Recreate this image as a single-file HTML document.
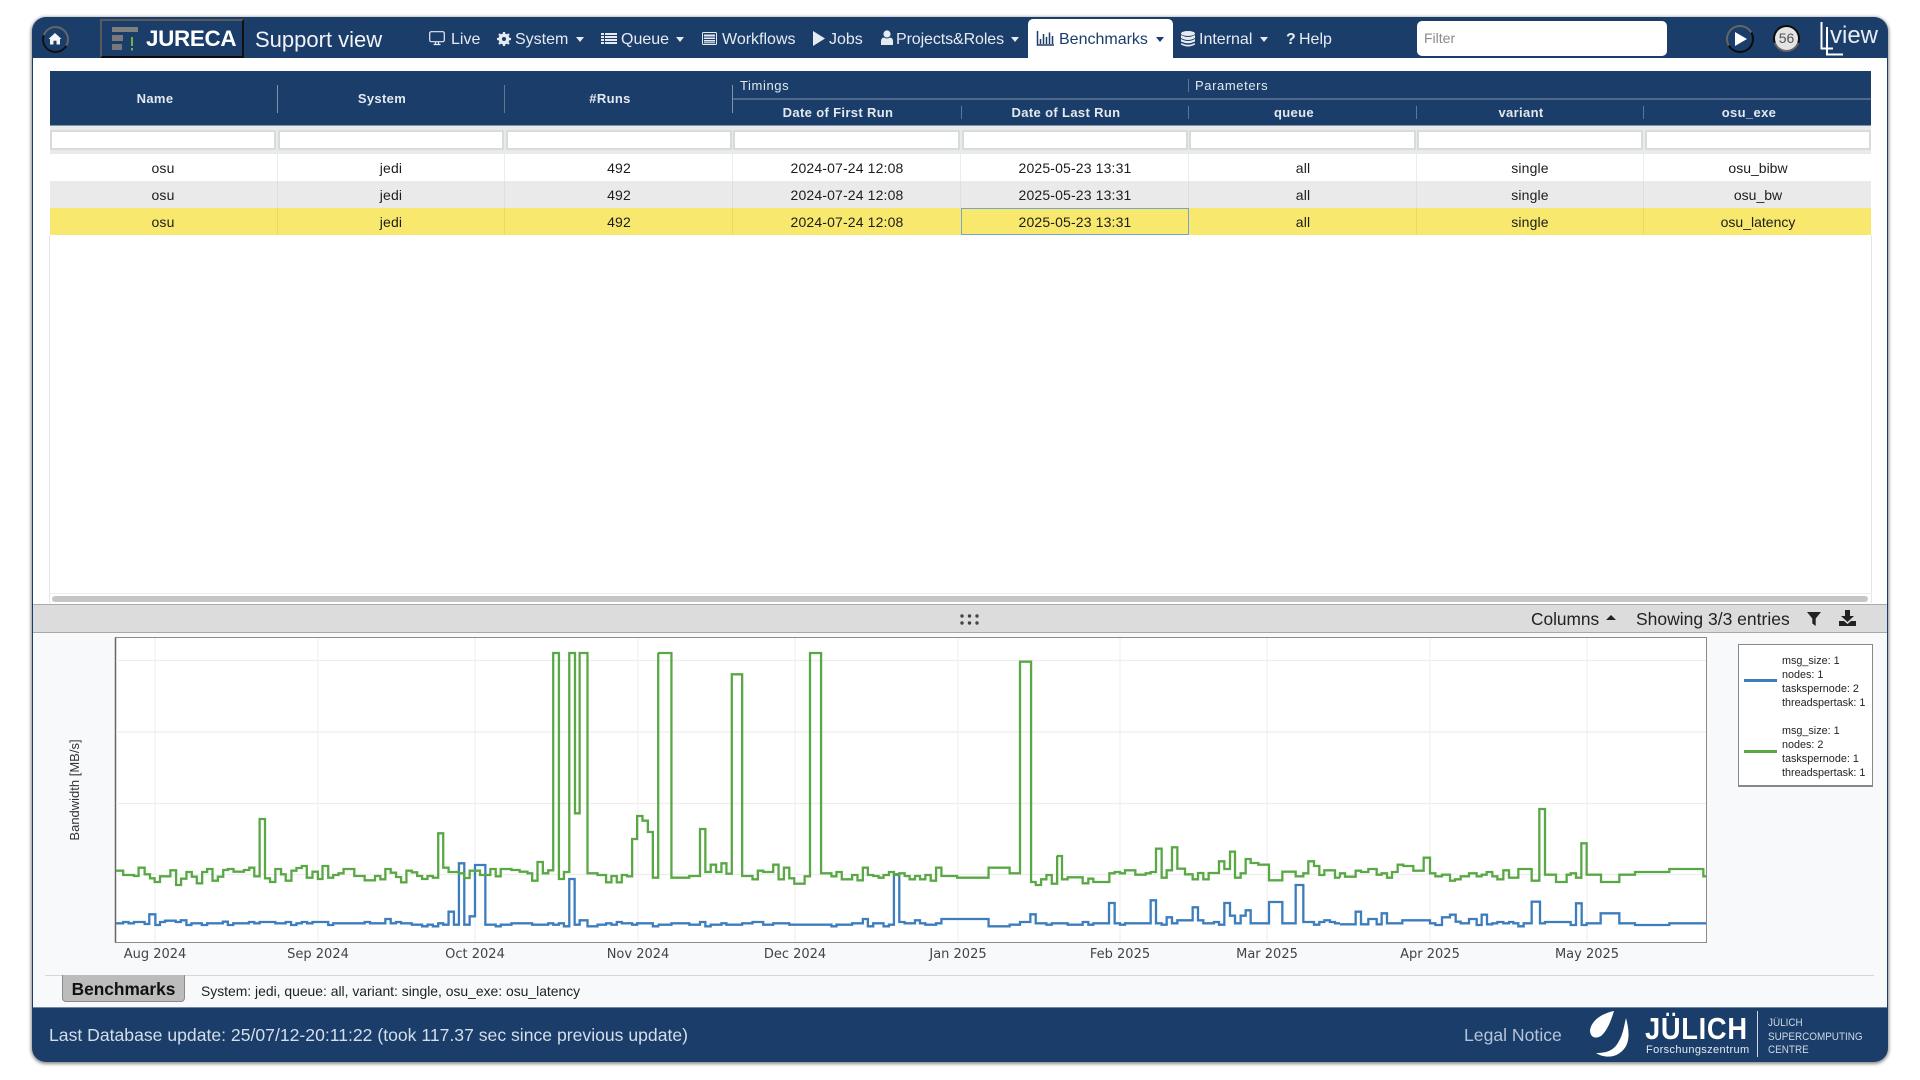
<!DOCTYPE html>
<html><head><meta charset="utf-8"><title>JURECA Support view</title>
<style>
*{box-sizing:border-box}
html,body{margin:0;padding:0;width:1920px;height:1080px;overflow:hidden;background:#fff;font-family:"Liberation Sans",sans-serif}
.a{position:absolute;white-space:nowrap}
#app{position:absolute;left:32px;top:17px;width:1856px;height:1045px;border-radius:14px;background:#1a3d6a;box-shadow:0 1px 3px 1px rgba(0,0,0,.45)}
#white{position:absolute;left:33px;top:58px;width:1854px;height:949px;background:#fff}
#lower{position:absolute;left:33px;top:632px;width:1854px;height:375px;background:#f8f9fa}
.nav{color:#e6ebf2;font-size:16px;top:30px;line-height:20px}
.car{position:absolute;top:37px;width:0;height:0;border-left:4.5px solid transparent;border-right:4.5px solid transparent;border-top:5px solid #e6ebf2}
.hd{color:#e4e9f0;font-size:13px;font-weight:bold;letter-spacing:.35px;transform:translateX(-50%);line-height:16px}
.dv{position:absolute;width:1px;background:#7186a3}
.inp{position:absolute;top:130px;height:20px;background:#fff;border:2px solid #d8dbdb;width:226px}
.row{position:absolute;left:50px;width:1821px;height:27px}
.c{position:absolute;font-size:14px;letter-spacing:.15px;color:#1c1c1c;transform:translateX(-50%);line-height:16px;white-space:nowrap}
.cd{position:absolute;width:1px}
.tick{font-family:"DejaVu Sans",sans-serif;font-size:13px;fill:#444;text-anchor:middle}
.leg{position:absolute;left:1782px;font-size:10.8px;color:#222;line-height:14px;white-space:nowrap}
svg{position:absolute;overflow:visible}
</style></head><body>
<div id="app"></div>
<div id="white"></div>
<div id="lower"></div>

<!-- brand -->
<div class="a" style="left:42px;top:26px;width:27px;height:27px;border-radius:50%;background:conic-gradient(#666 0 120deg,#111 120deg 290deg,#666 290deg);"></div>
<div class="a" style="left:44px;top:28px;width:23px;height:23px;border-radius:50%;background:#1a3d6a"></div>
<svg style="left:48px;top:32px" width="14" height="14" viewBox="0 0 14 14"><path d="M7 1 L13.5 7 L12 7 L12 12.5 L8.5 12.5 L8.5 8.8 L5.5 8.8 L5.5 12.5 L2 12.5 L2 7 L.5 7 Z" fill="#f3f5f8"/></svg>
<div class="a" style="left:100px;top:19px;width:144px;height:39px;background:#1a3d6a;border:2px solid;border-color:#5a5a5a #111 #0c0c0c #5a5a5a"></div>
<svg style="left:111px;top:27px" width="30" height="26" viewBox="0 0 30 26"><rect x="1" y="0" width="26" height="5" fill="#808080"/><rect x="1" y="8" width="11" height="6" fill="#7a7a7a"/><rect x="1" y="17" width="10" height="6" fill="#777"/><rect x="20" y="10" width="2" height="9" fill="#6db33f"/><rect x="20" y="21" width="2" height="2.5" fill="#6db33f"/></svg>
<div class="a" style="left:146px;top:25px;font-size:22.4px;font-weight:bold;color:#fff;line-height:28px;letter-spacing:-.3px">JURECA</div>
<div class="a" style="left:255px;top:26px;font-size:22px;color:#f0f3f7;line-height:28px">Support view</div>

<!-- nav -->
<svg style="left:429px;top:31px" width="16" height="15" viewBox="0 0 16 15"><rect x=".7" y=".7" width="14.6" height="10" rx="1.5" fill="none" stroke="#e6ebf2" stroke-width="1.2"/><path d="M6.5 11 v2 M9.5 11 v2 M4.5 13.5 h7" stroke="#e6ebf2" stroke-width="1.2" fill="none"/></svg>
<div class="a nav" style="left:451px">Live</div>
<svg style="left:497px;top:32px" width="14" height="14" viewBox="0 0 14 14"><circle cx="7" cy="7" r="4" fill="none" stroke="#e6ebf2" stroke-width="3"/><path d="M7 0 V14 M0 7 H14 M2 2 L12 12 M12 2 L2 12" stroke="#e6ebf2" stroke-width="2.2"/><circle cx="7" cy="7" r="2" fill="#1a3d6a"/></svg>
<div class="a nav" style="left:515px">System</div><div class="car" style="left:576px"></div>
<svg style="left:601px;top:32px" width="16" height="13" viewBox="0 0 16 13"><path d="M0 1h3v2H0zM4 1h12v2H4zM0 4h3v2H0zM4 4h12v2H4zM0 7h3v2H0zM4 7h12v2H4zM0 10h3v2H0zM4 10h12v2H4z" fill="#e6ebf2"/></svg>
<div class="a nav" style="left:621px">Queue</div><div class="car" style="left:676px"></div>
<svg style="left:702px;top:32px" width="15" height="13" viewBox="0 0 15 13"><rect x=".5" y=".5" width="14" height="12" rx="1" fill="none" stroke="#e6ebf2"/><path d="M2 2.5h11v2H2zM2 5.5h11v1.5H2zM2 8h11v1.5H2zM2 10.2h11v1H2z" fill="#e6ebf2"/></svg>
<div class="a nav" style="left:722px">Workflows</div>
<svg style="left:812px;top:31px" width="14" height="15" viewBox="0 0 14 15"><path d="M1 0 L13 7.5 L1 15Z" fill="#e6ebf2"/></svg>
<div class="a nav" style="left:829px">Jobs</div>
<svg style="left:881px;top:30px" width="12" height="15" viewBox="0 0 12 15"><circle cx="6" cy="4" r="3.6" fill="#e6ebf2"/><path d="M0 15 V11 Q0 8 3 7.5 Q6 9.5 9 7.5 Q12 8 12 11 V15Z" fill="#e6ebf2"/></svg>
<div class="a nav" style="left:896px;letter-spacing:-.1px">Projects&amp;Roles</div><div class="car" style="left:1011px"></div>
<div class="a" style="left:1028px;top:19px;width:145px;height:40px;background:#fff;border-radius:5px 5px 0 0"></div>
<svg style="left:1037px;top:31px" width="17" height="15" viewBox="0 0 17 15"><path d="M.5 0 V14 H17 M3.5 8v5 M6.5 3v10 M9.5 6v7 M12.5 1.5v11.5 M15.5 5v8" fill="none" stroke="#1a3d6a" stroke-width="1.5"/></svg>
<div class="a nav" style="left:1059px;color:#1a3d6a">Benchmarks</div><div class="car" style="left:1156px;border-top-color:#1a3d6a"></div>
<svg style="left:1181px;top:31px" width="14" height="16" viewBox="0 0 14 16"><ellipse cx="7" cy="2.5" rx="7" ry="2.5" fill="#e6ebf2"/><path d="M0 4 Q7 8 14 4 V7 Q7 11 0 7Z M0 8 Q7 12 14 8 V10.5 Q7 14 0 10.5Z M0 12 Q7 15.5 14 12 V13.5 Q7 17.500 0 13.500Z" fill="#e6ebf2"/></svg>
<div class="a nav" style="left:1199px">Internal</div><div class="car" style="left:1260px"></div>
<div class="a nav" style="left:1286px;font-weight:bold">?</div>
<div class="a nav" style="left:1299px">Help</div>
<div class="a" style="left:1417px;top:21px;width:250px;height:35px;background:#fff;border-radius:5px;font-size:14px;color:#8a8a8a;line-height:35px;padding-left:7px">Filter</div>

<div class="a" style="left:1726px;top:25px;width:28px;height:28px;border-radius:50%;background:conic-gradient(#666 0 60deg,#0c0c0c 60deg 240deg,#666 240deg)"></div>
<div class="a" style="left:1728px;top:27px;width:24px;height:24px;border-radius:50%;background:#1a3d6a"></div>
<svg style="left:1735px;top:32px" width="12" height="14" viewBox="0 0 12 14"><path d="M0 0 L12 7 L0 14Z" fill="#fff"/></svg>
<div class="a" style="left:1773px;top:25px;width:27px;height:27px;border-radius:50%;background:conic-gradient(#0c0c0c 0 110deg,#666 110deg 250deg,#0c0c0c 250deg)"></div>
<div class="a" style="left:1775px;top:27px;width:23px;height:23px;border-radius:50%;background:#e4e4e4;color:#555;font-size:14px;text-align:center;line-height:23px">56</div>
<svg style="left:1819px;top:22px" width="26" height="34" viewBox="0 0 26 34"><path d="M2.500 0 V26.500 H14 M8 5 V32.500 H24" fill="none" stroke="#fff" stroke-width="2"/></svg>
<div class="a" style="left:1830px;top:21px;font-size:24px;color:#e8edf3;line-height:30px">view</div>

<!-- table header -->
<div class="a" style="left:50px;top:71px;width:1821px;height:55px;background:#1a3d6a;border-bottom:1px solid #8293a9"></div>
<div class="a" style="left:732px;top:97.500px;width:1139px;height:2px;background:#51688a"></div>
<div class="dv" style="left:277px;top:85px;height:28px;background:#7f93ac"></div>
<div class="dv" style="left:504px;top:85px;height:28px;background:#5f7695"></div>
<div class="dv" style="left:732px;top:85px;height:28px;background:#7f93ac"></div>
<div class="dv" style="left:961px;top:106px;height:13px;background:#5f7695"></div>
<div class="dv" style="left:1188px;top:79px;height:13px;background:#5f7695"></div>
<div class="dv" style="left:1188px;top:106px;height:13px;background:#5f7695"></div>
<div class="dv" style="left:1416px;top:106px;height:13px;background:#5f7695"></div>
<div class="dv" style="left:1643px;top:106px;height:13px;background:#5f7695"></div>
<div class="a hd" style="left:155px;top:91px">Name</div>
<div class="a hd" style="left:382px;top:91px">System</div>
<div class="a hd" style="left:610px;top:91px">#Runs</div>
<div class="a hd" style="left:740px;top:78px;transform:none;font-weight:normal;letter-spacing:.6px">Timings</div>
<div class="a hd" style="left:1195px;top:78px;transform:none;font-weight:normal;letter-spacing:.6px">Parameters</div>
<div class="a hd" style="left:838px;top:105px">Date of First Run</div>
<div class="a hd" style="left:1066px;top:105px">Date of Last Run</div>
<div class="a hd" style="left:1294px;top:105px">queue</div>
<div class="a hd" style="left:1521px;top:105px">variant</div>
<div class="a hd" style="left:1749px;top:105px">osu_exe</div>

<!-- filter row -->
<div class="a" style="left:50px;top:126px;width:1821px;height:28px;background:#e9eaea"></div>
<div class="inp" style="left:50px"></div><div class="inp" style="left:278px"></div><div class="inp" style="left:506px"></div><div class="inp" style="left:733px;width:227px"></div><div class="inp" style="left:962px"></div><div class="inp" style="left:1189px;width:227px"></div><div class="inp" style="left:1417px"></div><div class="inp" style="left:1645px"></div>

<!-- rows -->
<div class="row" style="top:154px;background:#fff"></div>
<div class="row" style="top:181px;background:#eaeaea"></div>
<div class="row" style="top:208px;background:#f8e96e"></div>
<div class="cd" style="left:277px;top:154px;height:27px;background:#ececec"></div><div class="cd" style="left:504px;top:154px;height:27px;background:#ececec"></div><div class="cd" style="left:732px;top:154px;height:27px;background:#ececec"></div><div class="cd" style="left:960px;top:154px;height:27px;background:#ececec"></div><div class="cd" style="left:1188px;top:154px;height:27px;background:#ececec"></div><div class="cd" style="left:1416px;top:154px;height:27px;background:#ececec"></div><div class="cd" style="left:1643px;top:154px;height:27px;background:#ececec"></div>
<div class="cd" style="left:277px;top:181px;height:27px;background:#dedede"></div><div class="cd" style="left:504px;top:181px;height:27px;background:#dedede"></div><div class="cd" style="left:732px;top:181px;height:27px;background:#dedede"></div><div class="cd" style="left:960px;top:181px;height:27px;background:#dedede"></div><div class="cd" style="left:1188px;top:181px;height:27px;background:#dedede"></div><div class="cd" style="left:1416px;top:181px;height:27px;background:#dedede"></div><div class="cd" style="left:1643px;top:181px;height:27px;background:#dedede"></div>
<div class="cd" style="left:277px;top:208px;height:27px;background:#e9db62"></div><div class="cd" style="left:504px;top:208px;height:27px;background:#e9db62"></div><div class="cd" style="left:732px;top:208px;height:27px;background:#e9db62"></div><div class="cd" style="left:1416px;top:208px;height:27px;background:#e9db62"></div><div class="cd" style="left:1643px;top:208px;height:27px;background:#e9db62"></div>
<div class="a" style="left:961px;top:208px;width:228px;height:27px;border:1px solid #6fa6d6"></div>

<div class="c" style="left:163px;top:160px">osu</div><div class="c" style="left:391px;top:160px">jedi</div><div class="c" style="left:619px;top:160px">492</div><div class="c" style="left:847px;top:160px">2024-07-24 12:08</div><div class="c" style="left:1075px;top:160px">2025-05-23 13:31</div><div class="c" style="left:1303px;top:160px">all</div><div class="c" style="left:1530px;top:160px">single</div><div class="c" style="left:1758px;top:160px;letter-spacing:0">osu_bibw</div>
<div class="c" style="left:163px;top:187px">osu</div><div class="c" style="left:391px;top:187px">jedi</div><div class="c" style="left:619px;top:187px">492</div><div class="c" style="left:847px;top:187px">2024-07-24 12:08</div><div class="c" style="left:1075px;top:187px">2025-05-23 13:31</div><div class="c" style="left:1303px;top:187px">all</div><div class="c" style="left:1530px;top:187px">single</div><div class="c" style="left:1758px;top:187px;letter-spacing:0">osu_bw</div>
<div class="c" style="left:163px;top:214px">osu</div><div class="c" style="left:391px;top:214px">jedi</div><div class="c" style="left:619px;top:214px">492</div><div class="c" style="left:847px;top:214px">2024-07-24 12:08</div><div class="c" style="left:1075px;top:214px">2025-05-23 13:31</div><div class="c" style="left:1303px;top:214px">all</div><div class="c" style="left:1530px;top:214px">single</div><div class="c" style="left:1758px;top:214px;letter-spacing:0">osu_latency</div>

<div class="a" style="left:49px;top:235px;width:1px;height:368px;background:#e6e6e6"></div>
<div class="a" style="left:1871px;top:235px;width:1px;height:368px;background:#e6e6e6"></div>
<div class="a" style="left:49px;top:593px;width:1823px;height:1px;background:#ececec"></div>
<div class="a" style="left:52px;top:596px;width:1816px;height:6px;border-radius:3px;background:#c6c6c6"></div>

<!-- resize bar -->
<div class="a" style="left:33px;top:604px;width:1854px;height:29px;background:#dcdcdc;border-top:1px solid #aaa;border-bottom:1px solid #a8a8a8"></div>
<svg style="left:960px;top:614px" width="20" height="11" viewBox="0 0 20 11"><g fill="#444"><circle cx="2" cy="2" r="1.700"/><circle cx="9.500" cy="2" r="1.700"/><circle cx="17" cy="2" r="1.700"/><circle cx="2" cy="9" r="1.700"/><circle cx="9.500" cy="9" r="1.700"/><circle cx="17" cy="9" r="1.700"/></g></svg>
<div class="a" style="left:1531px;top:609px;font-size:17.3px;color:#222;line-height:20px">Columns</div>
<div class="a" style="left:1606px;top:615px;width:0;height:0;border-left:5px solid transparent;border-right:5px solid transparent;border-bottom:5px solid #222"></div>
<div class="a" style="left:1636px;top:609px;font-size:17.5px;color:#222;line-height:20px">Showing 3/3 entries</div>
<svg style="left:1807px;top:612px" width="14" height="14" viewBox="0 0 14 14"><path d="M0 0 H14 L8.700 6.500 V14 L5.300 11.500 V6.500Z" fill="#222"/></svg>
<svg style="left:1839px;top:610px" width="17" height="16" viewBox="0 0 17 16"><path d="M6 0 H11 V6 H15 L8.500 12 L2 6 H6Z M0 11 H5 L8.500 14 L12 11 H17 V16 H0Z" fill="#222"/></svg>

<!-- chart -->
<svg style="left:0;top:0" width="1920" height="1080" viewBox="0 0 1920 1080">
<defs><clipPath id="cp"><rect x="116" y="638" width="1590" height="304"/></clipPath></defs>
<rect x="115.500" y="637.500" width="1591" height="305" fill="#fff" stroke="#8a8a8a"/>
<path d="M115.500 637.500 V942.500" stroke="#666" stroke-width="1.500"/>
<path d="M155 638V942M318 638V942M475 638V942M638 638V942M795 638V942M958 638V942M1120 638V942M1267 638V942M1430 638V942M1587 638V942" stroke="#eee"/>
<path d="M116 660.500H1706M116 732H1706M116 803.500H1706M116 874.500H1706" stroke="#eee" stroke-width="1.200"/>
<g clip-path="url(#cp)" fill="none" stroke-linejoin="miter">
<g stroke="#3d7dbd" stroke-width="2.300">
<polyline vector-effect="non-scaling-stroke" transform="translate(100,630) scale(.35714,.33333)" points="45,880 65,880 65,876 80,876 80,880 95,880 95,876 125,876 125,882 138,882 138,853 155,853 155,885 168,885 168,876 182,876 182,872 212,872 212,876 226,876 226,871 242,871 242,885 256,885 256,880 285,880 285,885 300,885 300,880 344,880 344,875 358,875 358,885 373,885 373,880 417,880 417,876 432,876 432,880 447,880 447,876 491,876 491,880 520,880 520,876 535,876 535,885 550,885 550,880 565,880 565,876 580,876 580,880 595,880 595,876 639,876 639,885 653,885 653,880 741,880 741,876 756,876 756,880 799,880 799,867 814,867 814,880 829,880 829,876 843,876 843,880 873,880 873,884 902,884 902,889 917,889 917,884 932,884 932,889 947,889 947,880 961,880 961,884 976,884 976,845 991,845 991,884 1005,884 1005,700 1020,700 1020,884 1035,884 1035,859 1050,859 1050,705 1079,705 1079,884 1108,884 1108,889 1122,889 1122,884 1152,884 1152,880 1210,880 1210,884 1255,884 1255,880 1269,880 1269,884 1285,884 1285,880 1299,880 1299,889 1314,889 1314,747 1329,747 1329,884 1343,884 1343,871 1365,871 1365,889 1393,889 1393,884 1417,884 1417,880 1432,880 1432,884 1447,884 1447,876 1461,876 1461,880 1490,880 1490,884 1504,884 1504,880 1548,880 1548,889 1563,889 1563,884"/>
<polyline vector-effect="non-scaling-stroke" transform="translate(500,630) scale(.35714,.33333)" points="442,884 480,884 480,880 530,880 530,884 560,884 560,876 575,876 575,889 590,889 590,884 620,884 620,880 634,880 634,884 678,884 678,880 707,880 707,876 737,876 737,884 765,884 765,880 810,880 810,884 928,884 928,889 942,889 942,884 986,884 986,880 1016,880 1016,867 1030,867 1030,889 1045,889 1045,880 1074,880 1074,889 1089,889 1089,884 1103,884 1103,733 1118,733 1118,876 1133,876 1133,880 1162,880 1162,871 1176,871 1176,880 1191,880 1191,884 1221,884 1221,880 1236,880 1236,867 1368,867 1368,889 1427,889 1427,884 1456,884 1456,876 1485,876 1485,853 1500,853 1500,880 1530,880 1530,884 1545,884 1545,880 1560,880"/>
<polyline vector-effect="non-scaling-stroke" transform="translate(1000,630) scale(.33333,.33333)" points="170,880 203,880 203,884 248,884 248,876 265,876 265,884 280,884 280,880 327,880 327,819 344,819 344,880 360,880 360,884 375,884 375,880 452,880 452,811 468,811 468,880 485,880 485,884 500,884 500,862 516,862 516,880 532,880 532,871 578,871 578,832 594,832 594,871 610,871 610,880 642,880 642,876 657,876 657,884 673,884 673,819 690,819 690,857 705,857 705,880 722,880 722,857 737,857 737,841 752,841 752,880 807,880 807,816 847,816 847,880 887,880 887,765 910,765 910,876 942,876 942,884 958,884 958,876 973,876 973,871 990,871 990,876 1005,876 1005,880 1020,880"/>
<polyline vector-effect="non-scaling-stroke" transform="translate(1340,800) scale(.33333,.33333)" points="0,373 47,373 47,335 63,335 63,373 85,373 85,357 110,357 110,373 125,373 125,340 141,340 141,370 187,370 187,361 270,361 270,370 286,370 286,375 306,375 306,352 330,352 330,344 347,344 347,365 362,365 362,370 387,370 387,357 410,357 410,375 425,375 425,344 441,344 441,373 457,373 457,370 472,370 472,366 490,366 490,370 507,370 507,366 520,366 520,370 535,370 535,379 551,379 551,370 575,370 575,305 600,305 600,370 615,370 615,366 692,366 692,375 708,375 708,310 725,310 725,375 740,375 740,370 782,370 782,340 838,340 838,370 885,370 885,375 988,375 988,370 1098,370"/>
</g>
<g stroke="#5aa845" stroke-width="2.300">
<polyline vector-effect="non-scaling-stroke" transform="translate(100,630) scale(.35714,.33333)" points="45,722 65,722 65,735 95,735 95,738 108,738 108,713 125,713 125,733 140,733 140,745 153,745 153,756 168,756 168,739 197,739 197,721 213,721 213,765 227,765 227,746 242,746 242,726 257,726 257,740 271,740 271,760 286,760 286,726 300,726 300,717 315,717 315,752 330,752 330,740 345,740 345,720 358,720 358,717 374,717 374,725 403,725 403,720 418,720 418,713 432,713 432,739 447,739 447,567 462,567 462,745 476,745 476,756 491,756 491,717 507,717 507,733 520,733 520,752 536,752 536,722 550,722 550,714 565,714 565,708 579,708 579,743 595,743 595,725 610,725 610,747 623,747 623,708 639,708 639,743 653,743 653,735 668,735 668,730 682,730 682,717 712,717 712,738 741,738 741,751 770,751 770,738 785,738 785,748 799,748 799,717 814,717 814,728 829,728 829,741 843,741 843,757 858,757 858,722 873,722 873,727 888,727 888,738 902,738 902,747 917,747 917,738 932,738 932,743 947,743 947,610 961,610 961,713 976,713 976,726 1005,726 1005,730 1020,730 1020,744 1035,744 1035,722 1064,722 1064,735 1093,735 1093,717 1108,717 1108,739 1122,739 1122,717 1152,717 1152,720 1175,720 1175,725 1197,725 1197,730 1210,730 1210,752 1225,752 1225,696 1240,696 1240,730 1255,730 1255,721 1269,721 1269,69 1285,69 1285,747 1299,747 1299,726 1314,726 1314,69 1330,69 1330,550 1343,550 1343,69 1365,69 1365,730 1393,730 1393,735 1417,735 1417,757 1432,757 1432,738 1447,738 1447,757 1461,757 1461,735 1476,735 1476,739 1490,739 1490,627 1504,627 1504,558 1519,558 1519,572 1534,572 1534,606 1548,606 1548,743 1563,743 1563,69"/>
<polyline vector-effect="non-scaling-stroke" transform="translate(500,630) scale(.35714,.33333)" points="442,69 480,69 480,743 530,743 530,738 560,738 560,597 575,597 575,726 590,726 590,704 605,704 605,726 620,726 620,700 634,700 634,731 649,731 649,133 678,133 678,738 707,738 707,748 722,748 722,722 737,722 737,726 765,726 765,704 780,704 780,748 795,748 795,713 810,713 810,745 824,745 824,761 853,761 853,739 868,739 868,69 899,69 899,730 928,730 928,739 942,739 942,726 957,726 957,748 986,748 986,735 1001,735 1001,751 1016,751 1016,713 1030,713 1030,735 1045,735 1045,738 1060,738 1060,743 1074,743 1074,735 1089,735 1089,726 1103,726 1103,735 1118,735 1118,730 1133,730 1133,738 1147,738 1147,748 1162,748 1162,738 1176,738 1176,748 1191,748 1191,735 1206,735 1206,752 1221,752 1221,713 1236,713 1236,738 1280,738 1280,743 1368,743 1368,713 1427,713 1427,730 1456,730 1456,95 1487,95 1487,756 1500,756 1500,765 1515,765 1515,748 1530,748 1530,735 1545,735 1545,761 1560,761 1560,678"/>
<polyline vector-effect="non-scaling-stroke" transform="translate(1000,630) scale(.33333,.33333)" points="170,678 186,678 186,748 203,748 203,742 248,742 248,760 265,760 265,746 280,746 280,756 328,756 328,730 344,730 344,726 360,726 360,730 375,730 375,721 406,721 406,734 437,734 437,730 452,730 452,726 468,726 468,656 485,656 485,743 500,743 500,721 516,721 516,652 532,652 532,716 555,716 555,733 578,733 578,748 594,748 594,729 610,729 610,748 626,748 626,729 657,729 657,694 673,694 673,717 690,717 690,665 705,665 705,743 722,743 722,730 737,730 737,687 752,687 752,699 775,699 775,704 807,704 807,751 847,751 847,725 887,725 887,739 910,739 910,730 925,730 925,694 942,694 942,708 958,708 958,735 973,735 973,721 1005,721 1005,743 1020,743"/>
<polyline vector-effect="non-scaling-stroke" transform="translate(1340,800) scale(.33333,.33333)" points="0,233 0,220 15,220 15,230 47,230 47,212 63,212 63,216 85,216 85,207 110,207 110,224 125,224 125,220 141,220 141,233 156,233 156,216 173,216 173,194 190,194 190,198 220,198 220,212 251,212 251,173 270,173 270,220 286,220 286,229 306,229 306,224 330,224 330,242 345,242 345,238 362,238 362,229 387,229 387,220 410,220 410,229 425,229 425,224 440,224 440,216 457,216 457,229 472,229 472,238 490,238 490,211 507,211 507,233 535,233 535,207 575,207 575,242 598,242 598,27 615,27 615,224 648,224 648,246 680,246 680,224 692,224 692,220 708,220 708,233 724,233 724,130 740,130 740,224 783,224 783,246 838,246 838,224 885,224 885,216 988,216 988,207 1090,207 1090,229 1098,229"/>
</g>
</g>
<text class="tick" x="155" y="958">Aug 2024</text><text class="tick" x="318" y="958">Sep 2024</text><text class="tick" x="475" y="958">Oct 2024</text><text class="tick" x="638" y="958">Nov 2024</text><text class="tick" x="795" y="958">Dec 2024</text><text class="tick" x="958" y="958">Jan 2025</text><text class="tick" x="1120" y="958">Feb 2025</text><text class="tick" x="1267" y="958">Mar 2025</text><text class="tick" x="1430" y="958">Apr 2025</text><text class="tick" x="1587" y="958">May 2025</text>
<text transform="translate(79,790) rotate(-90)" text-anchor="middle" font-family="Liberation Sans, sans-serif" font-size="13" fill="#333">Bandwidth [MB/s]</text>
</svg>

<!-- legend -->
<div class="a" style="left:1738px;top:644px;width:135px;height:143px;background:#fff;border:1px solid #888;border-bottom-width:2px"></div>
<div class="a" style="left:1744px;top:679px;width:33px;height:2.500px;background:#3d7dbd"></div>
<div class="a" style="left:1744px;top:750px;width:33px;height:2.500px;background:#5aa845"></div>
<div class="leg" style="top:654px">msg_size: 1</div><div class="leg" style="top:668px">nodes: 1</div><div class="leg" style="top:682px">taskspernode: 2</div><div class="leg" style="top:696px">threadspertask: 1</div>
<div class="leg" style="top:724px">msg_size: 1</div><div class="leg" style="top:738px">nodes: 2</div><div class="leg" style="top:752px">taskspernode: 1</div><div class="leg" style="top:766px">threadspertask: 1</div>

<!-- tabs -->
<div class="a" style="left:45px;top:975px;width:1829px;height:1px;background:#d6d6d6"></div>
<div class="a" style="left:62px;top:975px;width:123px;height:27px;background:#bcbcbc;border:1px solid #8a8a8a;border-top:none;border-radius:0 0 4px 4px;font-size:17.300px;font-weight:bold;color:#111;text-align:center;line-height:29px">Benchmarks</div>
<div class="a" style="left:201px;top:982px;font-size:13.900px;color:#222;line-height:18px">System: jedi, queue: all, variant: single, osu_exe: osu_latency</div>

<!-- footer -->
<div class="a" style="left:33px;top:1007px;width:1854px;height:1px;background:#6f88a8"></div>
<div class="a" style="left:49px;top:1025px;font-size:17.600px;color:#d5deea;line-height:21px">Last Database update: 25/07/12-20:11:22 (took 117.37 sec since previous update)</div>
<div class="a" style="left:1464px;top:1025px;font-size:17.600px;color:#b5c5d9;line-height:21px">Legal Notice</div>
<svg style="left:1590px;top:1011px" width="46" height="47" viewBox="0 0 46 47"><path d="M24 0 C14 2 2 8 0 19 C0 27 6 28 11 25 C17 20 21 10 24 0Z" fill="#fff"/><path d="M36 7 C40 22 40 34 31 41 C24 47 14 47 6 42 C16 42 24 40 29 30 C33 23 34 15 36 7Z" fill="#fff"/></svg>
<div class="a" style="left:1645px;top:1011px;font-size:31px;font-weight:bold;color:#fff;line-height:36px;letter-spacing:.8px;transform:scaleX(.88);transform-origin:left center">JÜLICH</div>
<div class="a" style="left:1646px;top:1043px;font-size:11px;color:#e6ebf2;line-height:14px;letter-spacing:.37px">Forschungszentrum</div>
<div class="a" style="left:1757px;top:1011px;width:1px;height:46px;background:#cfd8e3"></div>
<div class="a" style="left:1768px;top:1017px;font-size:11px;color:#cfd8e3;line-height:13.500px;white-space:pre;transform:scaleX(.9);transform-origin:left center">JÜLICH
SUPERCOMPUTING
CENTRE</div>
</body></html>
